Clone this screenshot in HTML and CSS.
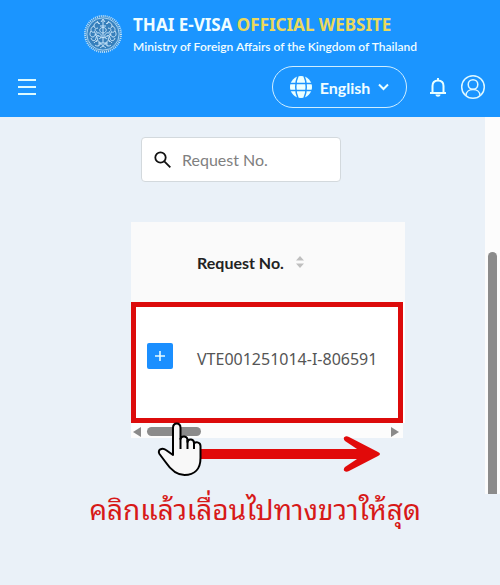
FILE: index.html
```html
<!DOCTYPE html>
<html lang="en">
<head>
<meta charset="utf-8">
<meta name="viewport" content="width=device-width, initial-scale=1">
<title>Thai E-Visa Official Website</title>
<link rel="stylesheet" href="styles.css">
</head>
<body>
<header class="header">
  <div class="brand">
    <svg class="seal" viewBox="0 0 40 40" aria-hidden="true">
      <circle cx="20" cy="20" r="18" fill="#3c8ccb"/>
      <circle class="seal-beads" cx="20" cy="20" r="18"/>
      <circle class="seal-ring" cx="20" cy="20" r="16.2"/>
      <circle cx="20" cy="20" r="14.8" fill="#377fbb"/>
      <g class="seal-lines">
        <path d="M20 6v6M18 8l2-3 2 3M17 12h6M20 12v17M17 15c1-2 5-2 6 0s-1 4-3 4-4-2-3-4z"/>
        <path id="side" d="M17 10c-3-3-6-1-6 2 0 2 2 3 4 2M11 12c-3 1-4 4-2 6 2 1 4-1 3-3M8 17c-2 3-1 6 2 6 3-1 3-4 1-5M14 17c-2 2-1 5 2 5M8 24c1 4 5 3 5 0s4-3 5 0M11 29c2-3 5-3 6 0s-3 4-5 2M14 19c3-1 5 2 4 4M15 32c1-3 4-3 5 0M14 7l2 3M12 20l3 5-2 3"/>
        <use href="#side" transform="translate(40 0) scale(-1 1)"/>
        <path d="M16 25c2-2 6-2 8 0M15 29h10M17 34c2-2 4-2 6 0"/>
      </g>
    </svg>
    <div>
      <h1 class="brand-title">THAI E-VISA <span class="gold">OFFICIAL WEBSITE</span></h1>
      <p class="brand-sub">Ministry of Foreign Affairs of the Kingdom of Thailand</p>
    </div>
  </div>
  <nav class="toolbar" aria-label="Main">
    <button class="icon-btn menu" type="button" aria-label="Menu">
      <svg width="20" height="18" viewBox="0 0 20 18"><path d="M1 2h18M1 9h18M1 16h18" stroke="#dcfaff" stroke-width="2"/></svg>
    </button>
    <button class="language" type="button">
      <svg width="22" height="22" viewBox="0 0 22 22">
        <circle cx="11" cy="11" r="11" fill="#eaffff"/>
        <path d="M0 7.5h22M0 14.5h22M8 0C5 6 5 16 8 22M14 0c3 6 3 16 0 22" fill="none" stroke="#1b95ff" stroke-width="1.5"/>
      </svg>
      <span>English</span>
      <svg width="11" height="8" viewBox="0 0 11 8"><path d="M1 1.5l4.500 4.500L10 1.500" fill="none" stroke="#eaffff" stroke-width="2"/></svg>
    </button>
    <button class="icon-btn" type="button" aria-label="Notifications">
      <svg width="18" height="20" viewBox="0 0 18 20">
        <path d="M1 16h16M3.500 16V9c0-3.500 2-5.500 5.500-5.500s5.500 2 5.500 5.500v7M9 1v2.500" fill="none" stroke="#eaffff" stroke-width="2"/>
        <path d="M6.500 17.500h5c0 3-5 3-5 0z" fill="#eaffff"/>
      </svg>
    </button>
    <button class="icon-btn" type="button" aria-label="Account">
      <svg width="26" height="26" viewBox="0 0 26 26" fill="none" stroke="#dff8ff" stroke-width="1.500">
        <circle cx="13" cy="13" r="11.300"/><circle cx="13" cy="10.500" r="4.800"/><path d="M6 21.500c0-8 14-8 14 0"/>
      </svg>
    </button>
  </nav>
</header>

<main>
  <div class="viewport">
    <div class="content">
      <label class="search">
        <svg width="18" height="18" viewBox="0 0 18 18" fill="none" stroke="#111" stroke-width="1.800"><circle cx="6.500" cy="6.500" r="5.200"/><path d="M10.300 10.300l6 6"/></svg>
        <input type="text" placeholder="Request No." aria-label="Request No.">
      </label>
      <div class="table-box">
        <table class="requests">
          <thead>
            <tr>
              <th class="expand-col"></th>
              <th>
                <span class="sort-label">Request No.
                  <svg width="8" height="14" viewBox="0 0 8 14" fill="#bfbfbf"><path d="M4 1l4 4.500H0zM4 13L0 8.500h8z"/></svg>
                </span>
              </th>
            </tr>
          </thead>
          <tbody>
            <tr>
              <td class="expand-col"><button class="expand" type="button" aria-label="Expand row"><svg width="12" height="12" viewBox="0 0 12 12"><path d="M1 6h10M6 1v10" stroke="#e8fbff" stroke-width="1.600"/></svg></button></td>
              <td>VTE001251014-I-806591</td>
            </tr>
          </tbody>
        </table>
        <div class="highlight"></div>
        <div class="hscroll">
          <svg width="8" height="10" viewBox="0 0 8 10"><path d="M8 0v10L0 5z" fill="#8a8a8a"/></svg>
          <div class="hthumb"></div>
          <svg width="8" height="10" viewBox="0 0 8 10"><path d="M0 0v10l8-5z" fill="#8a8a8a"/></svg>
        </div>
        <svg class="gesture" width="226" height="56" viewBox="0 0 226 56" aria-hidden="true">
          <path d="M38 28H200L188 20C185 17 188 14 192 16L221 31Q225 33 221 35L192 50C188 52 185 49 188 46L200 38H38z" fill="#e10a0a"/>
          <path d="M16 34V7c0-6 7.500-6 7.500 0v11c1-4 7-3 7 1v2c1-4 6.500-3 6.500 1v1c1-3 6.500-2 6.500 2v12c0 11-6 17-16 17-9 0-15-7-19-13L2.500 33C0 29 5 26 9 29z" fill="#f8f8f8" stroke="#000" stroke-width="2" stroke-linejoin="round"/>
          <path d="M23.500 17v11M30.500 19v9M37 22v6" stroke="#000" stroke-width="2"/>
        </svg>
      </div>
    </div>
    <div class="vscroll"><div class="vthumb"></div></div>
  </div>
  <p class="caption" lang="th">คลิกแล้วเลื่อนไปทางขวาให้สุด</p>
</main>
</body>
</html>
```
FILE: styles.css
```css
* { box-sizing: border-box; }

body {
  margin: 0;
  min-height: 100vh;
  background: #eaf1f8;
  font-family: Lato, "Noto Sans", sans-serif;
  font-size: 16px;
  color: #555;
}

h1, p { margin: 0; }

button {
  padding: 0;
  border: 0;
  background: none;
  font: inherit;
  color: inherit;
  cursor: pointer;
}

svg { display: block; flex: none; }

.header {
  padding: 12px 14px 9px 17px;
  background: #1b95ff;
  color: #f0fdff;
}

.brand {
  display: flex;
  justify-content: center;
  gap: 10px;
  height: 54px;
  padding-right: 3px;
}

.seal { width: 40px; height: 40px; margin-top: 2px; }
.seal-beads { fill: none; stroke: #b9dffb; stroke-width: 2; stroke-dasharray: 1 1; }
.seal-ring { fill: none; stroke: #a5d0f2; stroke-width: 1; }
.seal-lines { fill: none; stroke: #c6e4fa; stroke-width: 1; }

.brand-title {
  font: 700 17px/25px "Noto Sans", sans-serif;
}

.gold { color: #ebd95c; }

.brand-sub {
  font-size: 12px;
  line-height: 20px;
  font-weight: 600;
}

.toolbar {
  display: flex;
  align-items: center;
  height: 42px;
}

.icon-btn {
  display: grid;
  place-items: center;
  margin-left: 13px;
}

.menu { margin: 0 auto 0 0; }

.language {
  display: flex;
  align-items: center;
  justify-content: center;
  gap: 8px;
  width: 135px;
  height: 42px;
  margin-right: 9px;
  border: 1px solid #cfeeff;
  border-radius: 21px;
  font-weight: 700;
}

.viewport {
  display: grid;
  grid-template-columns: 1fr 15px;
}

.content { padding: 20px 80px 56px 131px; }

.search {
  display: flex;
  align-items: center;
  gap: 10px;
  width: 200px;
  height: 45px;
  margin: 0 0 40px 10px;
  padding: 0 12px;
  border: 1px solid #d3d9dd;
  border-radius: 4px;
  background: #fff;
}

.search input {
  width: 100%;
  min-width: 0;
  padding: 0;
  border: 0;
  outline: 0;
  background: none;
  font: inherit;
}

.search input::placeholder { color: #808080; opacity: 1; }

.table-box { position: relative; }

.requests {
  width: 100%;
  border-collapse: collapse;
  text-align: left;
}

.requests th {
  height: 80px;
  padding: 0;
  background: #fafafa;
  color: #222;
  font-weight: 700;
}

.requests td {
  height: 121px;
  padding: 0 0 8px;
  background: #fff;
  font-family: "Noto Sans", sans-serif;
  white-space: nowrap;
}

.requests .expand-col { width: 66px; padding: 0 0 14px 16px; }

.sort-label { display: flex; align-items: center; gap: 12px; }

.expand {
  display: grid;
  place-items: center;
  width: 26px;
  height: 26px;
  border-radius: 2px;
  background: #1b8fff;
}

.highlight {
  position: absolute;
  top: 80px;
  left: 0;
  right: 2px;
  height: 121px;
  border: 5px solid #dc0b0b;
}

.hscroll {
  display: flex;
  align-items: center;
  gap: 6px;
  height: 15px;
  margin-right: 2px;
  padding: 2px 4px 0 2px;
  background: #fcfcfc;
}

.hthumb {
  width: 54px;
  height: 9px;
  margin-right: auto;
  border-radius: 5px;
  background: #8b8b8b;
}

.gesture {
  position: absolute;
  left: 26px;
  bottom: -39px;
}

.vscroll {
  padding: 135px 3px 0;
  background: #fcfcfc;
}

.vthumb {
  height: 100%;
  border-radius: 5px 5px 0 0;
  background: #8b8b8b;
}

.caption {
  padding-left: 10px;
  text-align: center;
  font: 400 28px/28px "Noto Sans Thai Looped", "Noto Looped Thai", Loma, Garuda, Laksaman, "Noto Sans Thai", sans-serif;
  color: #d71918;
}
```
